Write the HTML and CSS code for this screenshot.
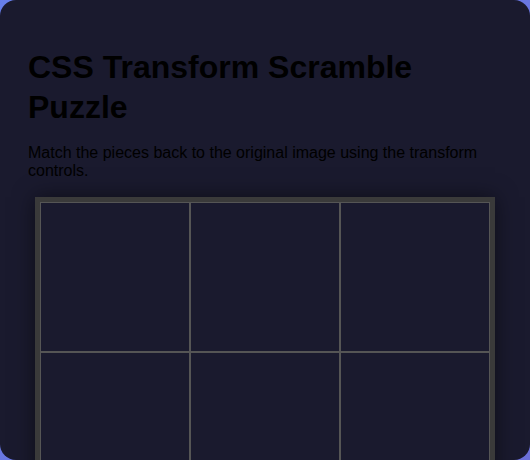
FILE: index.html
```html
<!DOCTYPE html>
<html>
<head>
<meta charset="utf-8">
<link rel="stylesheet" href="styles.css">
</head>
<body>
<div class="card">
  <h1 class="title">CSS Transform Scramble Puzzle</h1>
  <p class="intro">Match the pieces back to the original image using the transform controls.</p>
  <div class="board">
    <div class="cell"></div><div class="cell"></div><div class="cell"></div>
    <div class="cell"></div><div class="cell"></div><div class="cell"></div>
    <div class="cell"></div><div class="cell"></div><div class="cell"></div>
  </div>
</div>
</body>
</html>
```
FILE: styles.css
```css
html, body {
  margin: 0;
  padding: 0;
}
body {
  background: linear-gradient(135deg, #667eea 0%, #6b6fd8 100%);
  font-family: "Liberation Sans", Arial, sans-serif;
  color: #000;
  height: 460px;
  overflow: hidden;
}
.card {
  background: #1a1a2e;
  border-radius: 16px;
  padding: 47px 28px 28px;
  height: 460px;
  box-sizing: border-box;
  overflow: hidden;
}
.title {
  margin: 0 0 17px;
  font-size: 32px;
  line-height: 40px;
  font-weight: bold;
}
.intro {
  margin: 0 0 16px;
  font-size: 16px;
  line-height: 18.4px;
}
.board {
  width: 450px;
  margin: 0 auto;
  border: 5px solid #3a3a3a;
  display: grid;
  grid-template-columns: repeat(3, 150px);
  grid-auto-rows: 150px;
  box-shadow: 0 0 20px rgba(0, 0, 0, 0.5);
}
.cell {
  border: 1px solid #555;
  box-sizing: border-box;
  background: #1a1a2e;
}
```
